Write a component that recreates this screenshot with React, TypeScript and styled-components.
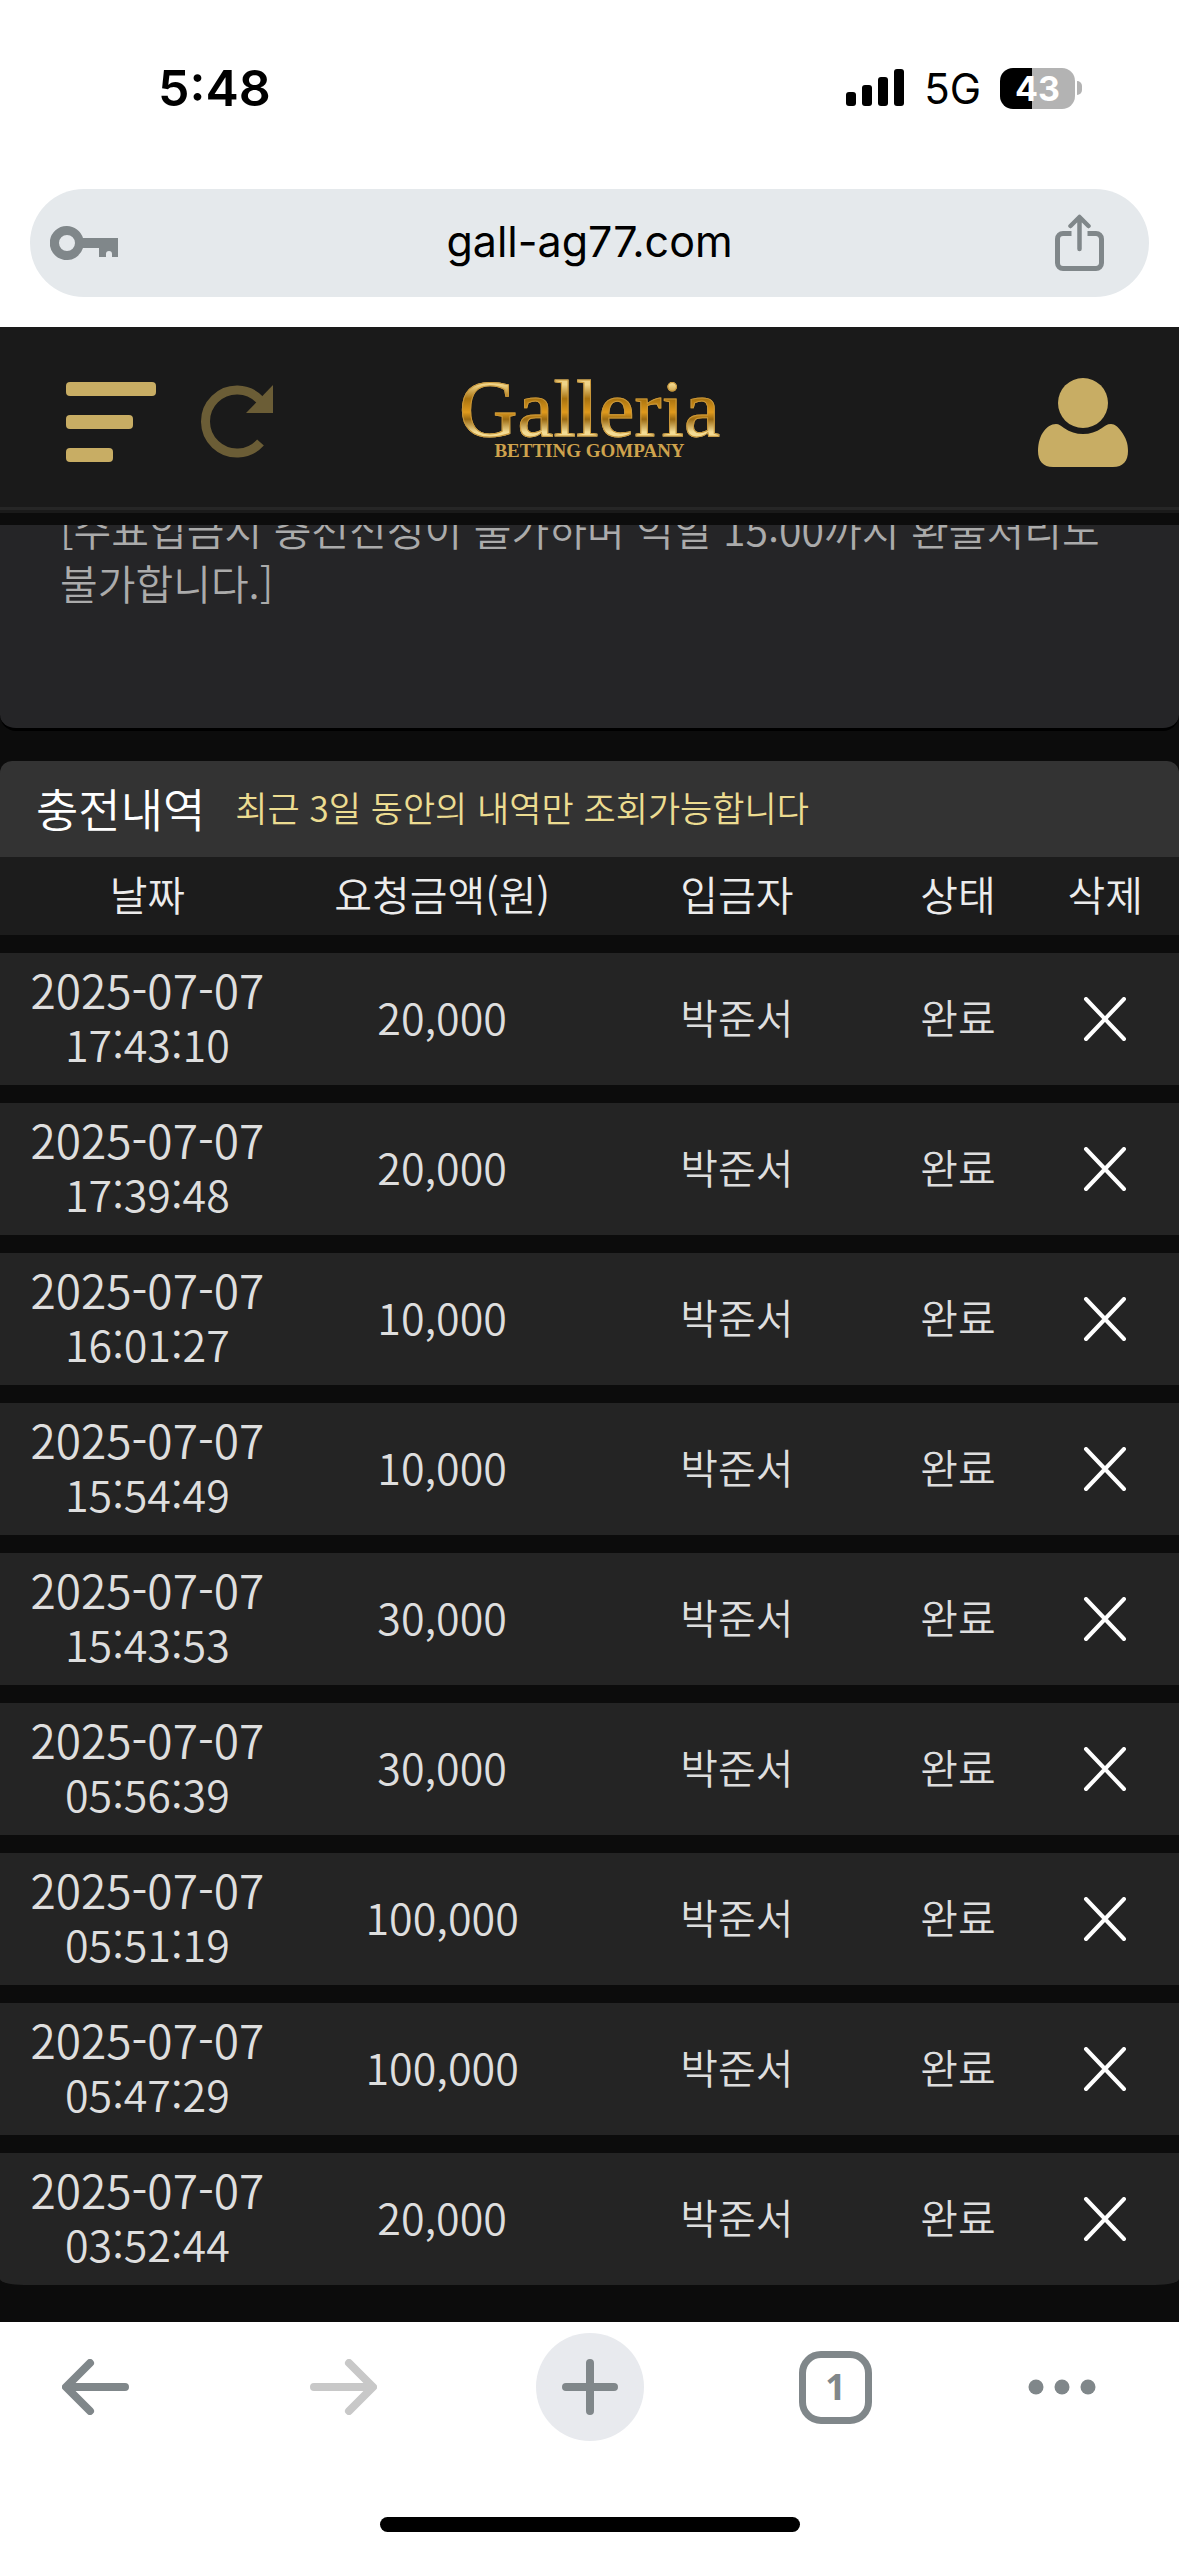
import React from "react";
import styled, { createGlobalStyle, css } from "styled-components";

const color = {
  page: "#0c0c0c",
  header: "#1a1a1a",
  panel: "#252527",
  title: "#333333",
  row: "#242424",
  gold: "#c8ad64",
  icon: "#80878a",
};

const GlobalStyle = createGlobalStyle`
  *, *::before, *::after { box-sizing: border-box; }
  body { margin: 0; background: ${color.page}; }
  button, input { font: inherit; color: inherit; border: 0; padding: 0; margin: 0; background: none; }
  button { cursor: pointer; }
  svg { display: block; }
`;

const Page = styled.div`
  font-family: "Noto Sans CJK KR", "Noto Sans", sans-serif;
  font-weight: 350;
  color: #dedede;
  background: ${color.page};
`;

const Chrome = styled.div`
  font-family: Inter, "Liberation Sans", sans-serif;
  font-weight: 400;
  color: #000;
  background: #fff;
`;

const StatusBar = styled.div`
  display: flex;
  justify-content: space-between;
  align-items: center;
  height: 176px;
  padding: 0 97px 0 158px;
`;

const Clock = styled.time`
  font-size: 50px;
  font-weight: 600;
`;

const StatusIcons = styled.div`
  display: flex;
  align-items: center;
  gap: 19px;
`;

const Network = styled.span`
  font-size: 42px;
`;

const BatteryWrap = styled.div`
  display: flex;
  align-items: center;
  gap: 2px;
`;

const Battery = styled.span<{ $level: number }>`
  width: 75px;
  height: 41px;
  border-radius: 13px;
  text-align: center;
  font-size: 34px;
  line-height: 41px;
  font-weight: 700;
  color: #fff;
  background: linear-gradient(90deg, #000 ${(p) => p.$level}%, #b3b3b3 ${(p) => p.$level}%);
`;

const BatteryTip = styled.span`
  width: 5px;
  height: 14px;
  border-radius: 0 7px 7px 0;
  background: #b3b3b3;
`;

const AddressArea = styled.div`
  padding: 13px 30px 30px;
`;

const AddressBar = styled.div`
  display: flex;
  align-items: center;
  justify-content: space-between;
  height: 108px;
  padding: 0 45px 0 20px;
  border-radius: 54px;
  background: #e5e9ec;
`;

const AddressInput = styled.input`
  flex: 1;
  min-width: 0;
  padding: 0 0 4px 6px;
  font-size: 43px;
  line-height: 56px;
  text-align: center;
  outline: none;
`;

const SiteHeader = styled.header`
  display: grid;
  grid-template-columns: 1fr auto 1fr;
  align-items: center;
  height: 186px;
  padding: 0 51px;
  background: ${color.header};
  border-bottom: 3px solid ${color.header};
  box-shadow: inset 0 -3px 0 #262626;
`;

const HeaderTools = styled.div`
  display: flex;
  align-items: center;
  gap: 45px;
  margin-top: 6px;
  padding-left: 15px;
`;

const MenuButton = styled.button`
  display: grid;
  gap: 19px;
`;

const MenuBar = styled.span<{ $width: number }>`
  width: ${(p) => p.$width}px;
  height: 14px;
  border-radius: 4px;
  background: ${color.gold};
`;

const UserButton = styled.button`
  justify-self: end;
  margin-top: 8px;
`;

const Brand = styled.a`
  display: grid;
  justify-items: center;
  font-family: "Liberation Serif", serif;
  text-decoration: none;
  color: transparent;
`;

const BrandName = styled.span`
  font-size: 81px;
  line-height: 64px;
  font-weight: 400;
  background: linear-gradient(180deg, #f0d488 12%, #a8720f 34%, #e09a1c 55%, #9b6a12 66%, #f4dc94 86%);
  -webkit-background-clip: text;
  background-clip: text;
  -webkit-text-stroke: 1px #c9973a;
`;

const BrandTag = styled.span`
  font-size: 19px;
  line-height: 20px;
  font-weight: 700;
  color: #cfa34d;
`;

const Notice = styled.section`
  display: flex;
  flex-direction: column;
  justify-content: flex-end;
  height: 206px;
  margin-top: 12px;
  padding: 0 60px 119px;
  overflow: hidden;
  background: ${color.panel};
  border-bottom: 3px solid #000;
  border-radius: 0 0 16px 16px;
`;

const NoticeText = styled.p`
  margin: 0;
  font-size: 41px;
  line-height: 54px;
  color: #ababab;
`;

const History = styled.section`
  margin-top: 30px;
  padding-bottom: 37px;
`;

const HistoryHead = styled.div`
  display: flex;
  align-items: center;
  gap: 30px;
  height: 96px;
  padding: 0 36px 4px;
  border-radius: 12px 12px 0 0;
  background: ${color.title};
`;

const HistoryTitle = styled.h2`
  margin: 0;
  font-size: 46px;
  line-height: 56px;
  font-weight: 350;
  color: #fff;
`;

const HistoryHint = styled.span`
  font-size: 35px;
  line-height: 56px;
  color: #ecdc91;
`;

const Table = styled.table`
  width: 100%;
  table-layout: fixed;
  border-collapse: separate;
  border-spacing: 0;
`;

const Column = styled.col<{ $share: string }>`
  width: ${(p) => p.$share};
`;

const cell = css`
  padding: 0 0 6px;
  text-align: center;
  font-size: 41px;
  line-height: 54px;
`;

const HeadCell = styled.th`
  ${cell}
  height: 78px;
  font-weight: inherit;
  color: #ececec;
  background: #1c1c1c;
`;

const Cell = styled.td`
  ${cell}
  height: 150px;
  border-top: 18px solid ${color.page};
  background: ${color.row};

  tr:last-child &:first-child { border-bottom-left-radius: 24px 6px; }
  tr:last-child &:last-child { border-bottom-right-radius: 24px 6px; }
`;

const ActionCell = styled(Cell)`
  padding: 0;
`;

const DateLine = styled.div`
  font-size: 46px;
`;

const Figure = styled.div`
  font-size: 43px;
`;

const DeleteButton = styled.button`
  display: block;
  margin: 0 auto;
`;

const BottomBar = styled(Chrome)`
  padding: 11px 0 24px;
`;

const Toolbar = styled.nav`
  display: grid;
  grid-template-columns: 191fr 303fr 191fr 301fr 151fr;
  align-items: center;
  justify-items: center;
  padding-right: 42px;
`;

const NewTab = styled.button`
  display: grid;
  place-items: center;
  width: 108px;
  height: 108px;
  border-radius: 50%;
  background: #e8eaee;
`;

const Tabs = styled.button`
  width: 73px;
  height: 73px;
  border: 7px solid ${color.icon};
  border-radius: 22px;
  font-family: "Noto Sans", sans-serif;
  font-size: 36px;
  line-height: 56px;
  font-weight: 700;
  color: ${color.icon};
`;

const HomeIndicator = styled.div`
  width: 420px;
  height: 15px;
  margin: 76px auto 0;
  border-radius: 8px;
  background: #000;
`;

const SignalIcon = () => (
  <svg width="59" height="38" viewBox="0 0 59 38" aria-hidden="true">
    <rect x="0" y="23" width="10" height="14" rx="3" />
    <rect x="16" y="16" width="10" height="21" rx="3" />
    <rect x="32" y="8" width="10" height="29" rx="3" />
    <rect x="48" y="0" width="10" height="37" rx="3" />
  </svg>
);

const KeyIcon = () => (
  <svg width="68" height="34" viewBox="0 0 68 34" fill={color.icon} aria-hidden="true">
    <path
      fillRule="evenodd"
      d="M17 0a17 17 0 0 1 16 12h35v19h-6v-3a3 3 0 0 0-6 0v3h-7v-9H33A17 17 0 1 1 17 0zm0 9a8 8 0 1 0 0 16a8 8 0 0 0 0-16z"
    />
  </svg>
);

const ShareIcon = () => (
  <svg width="49" height="58" viewBox="0 0 49 58" fill="none" stroke={color.icon} strokeWidth="5">
    <path d="M16.500 19.500H8a5.500 5.500 0 0 0-5.500 5.500v24a5.500 5.500 0 0 0 5.500 5.500h33a5.500 5.500 0 0 0 5.500-5.500V25a5.500 5.500 0 0 0-5.500-5.500h-8.500" />
    <path d="M24.500 35V3.500M15.500 12l9-9 9 9" strokeLinecap="round" strokeLinejoin="round" strokeWidth="4.500" />
  </svg>
);

const RefreshIcon = () => (
  <svg width="72" height="74" viewBox="0 0 72 74" aria-hidden="true">
    <path d="M59.500 57.500A31.500 31.500 0 1 1 59 15" fill="none" stroke="#6b5d36" strokeWidth="9" />
    <path d="M72 0v28H45z" fill="#6b5d36" />
  </svg>
);

const UserIcon = () => (
  <svg width="90" height="90" viewBox="0 0 90 90" fill={color.gold} aria-hidden="true">
    <circle cx="45" cy="25" r="25" />
    <path d="M18 46c3 0 5 2 8 4 6 4 12 6 19 6s13-2 19-6c3-2 5-4 9-4 4 0 7 3 10 7 5 7 7 12 7 20 0 10-5 16-15 16H15C5 89 0 83 0 73c0-8 2-15 6-20 3-4 7-7 12-7z" />
  </svg>
);

const CrossIcon = () => (
  <svg width="44" height="44" viewBox="0 0 44 44" stroke="#fff" strokeWidth="4" strokeLinecap="round">
    <path d="M3 2l38 40M41 2L3 42" />
  </svg>
);

const BackIcon = () => (
  <svg width="68" height="56" viewBox="0 0 68 56" fill="none" stroke={color.icon} strokeWidth="8" strokeLinecap="round" strokeLinejoin="round">
    <path d="M63 28H5M28 4L4 28l24 24" />
  </svg>
);

const ForwardIcon = () => (
  <svg width="68" height="56" viewBox="0 0 68 56" fill="none" stroke="#c8c8c8" strokeWidth="8" strokeLinecap="round" strokeLinejoin="round">
    <path d="M5 28h58M40 4l24 24-24 24" />
  </svg>
);

const PlusIcon = () => (
  <svg width="56" height="56" viewBox="0 0 56 56" stroke={color.icon} strokeWidth="8" strokeLinecap="round">
    <path d="M28 4v48M4 28h48" />
  </svg>
);

const MoreIcon = () => (
  <svg width="68" height="16" viewBox="0 0 68 16" fill={color.icon}>
    <circle cx="8" cy="8" r="7.500" />
    <circle cx="34" cy="8" r="7.500" />
    <circle cx="60" cy="8" r="7.500" />
  </svg>
);

const deposits = [
  { time: "17:43:10", amount: 20000 },
  { time: "17:39:48", amount: 20000 },
  { time: "16:01:27", amount: 10000 },
  { time: "15:54:49", amount: 10000 },
  { time: "15:43:53", amount: 30000 },
  { time: "05:56:39", amount: 30000 },
  { time: "05:51:19", amount: 100000 },
  { time: "05:47:29", amount: 100000 },
  { time: "03:52:44", amount: 20000 },
];

const columns = [
  { label: "날짜", share: "25%" },
  { label: "요청금액(원)", share: "25%" },
  { label: "입금자", share: "25%" },
  { label: "상태", share: "12.5%" },
  { label: "삭제", share: "12.5%" },
];

export default function App() {
  return (
    <Page lang="ko">
      <GlobalStyle />
      <Chrome>
        <StatusBar>
          <Clock>5:48</Clock>
          <StatusIcons>
            <SignalIcon />
            <Network>5G</Network>
            <BatteryWrap>
              <Battery $level={43}>43</Battery>
              <BatteryTip />
            </BatteryWrap>
          </StatusIcons>
        </StatusBar>
        <AddressArea>
          <AddressBar>
            <button type="button" aria-label="비밀번호"><KeyIcon /></button>
            <AddressInput type="text" aria-label="주소" defaultValue="gall-ag77.com" />
            <button type="button" aria-label="공유"><ShareIcon /></button>
          </AddressBar>
        </AddressArea>
      </Chrome>

      <SiteHeader>
        <HeaderTools>
          <MenuButton type="button" aria-label="메뉴">
            <MenuBar $width={90} />
            <MenuBar $width={67} />
            <MenuBar $width={47} />
          </MenuButton>
          <button type="button" aria-label="새로고침"><RefreshIcon /></button>
        </HeaderTools>
        <Brand href="#">
          <BrandName>Galleria</BrandName>
          <BrandTag>BETTING GOMPANY</BrandTag>
        </Brand>
        <UserButton type="button" aria-label="내 정보"><UserIcon /></UserButton>
      </SiteHeader>

      <main>
        <Notice>
          <NoticeText>
            [수표입금시 충전신청이 불가하며 익일 15:00까지 환불처리도 불가합니다.]
          </NoticeText>
        </Notice>

        <History>
          <HistoryHead>
            <HistoryTitle>충전내역</HistoryTitle>
            <HistoryHint>최근 3일 동안의 내역만 조회가능합니다</HistoryHint>
          </HistoryHead>
          <Table>
            <colgroup>
              {columns.map((c) => <Column key={c.label} $share={c.share} />)}
            </colgroup>
            <thead>
              <tr>
                {columns.map((c) => <HeadCell key={c.label} scope="col">{c.label}</HeadCell>)}
              </tr>
            </thead>
            <tbody>
              {deposits.map((d) => (
                <tr key={d.time}>
                  <Cell>
                    <DateLine>2025-07-07</DateLine>
                    <Figure>{d.time}</Figure>
                  </Cell>
                  <Cell><Figure>{d.amount.toLocaleString("en-US")}</Figure></Cell>
                  <Cell>박준서</Cell>
                  <Cell>완료</Cell>
                  <ActionCell>
                    <DeleteButton type="button" aria-label="삭제"><CrossIcon /></DeleteButton>
                  </ActionCell>
                </tr>
              ))}
            </tbody>
          </Table>
        </History>
      </main>

      <BottomBar>
        <Toolbar>
          <button type="button" aria-label="뒤로"><BackIcon /></button>
          <button type="button" aria-label="앞으로"><ForwardIcon /></button>
          <NewTab type="button" aria-label="새 탭"><PlusIcon /></NewTab>
          <Tabs type="button">1</Tabs>
          <button type="button" aria-label="더보기"><MoreIcon /></button>
        </Toolbar>
        <HomeIndicator />
      </BottomBar>
    </Page>
  );
}
